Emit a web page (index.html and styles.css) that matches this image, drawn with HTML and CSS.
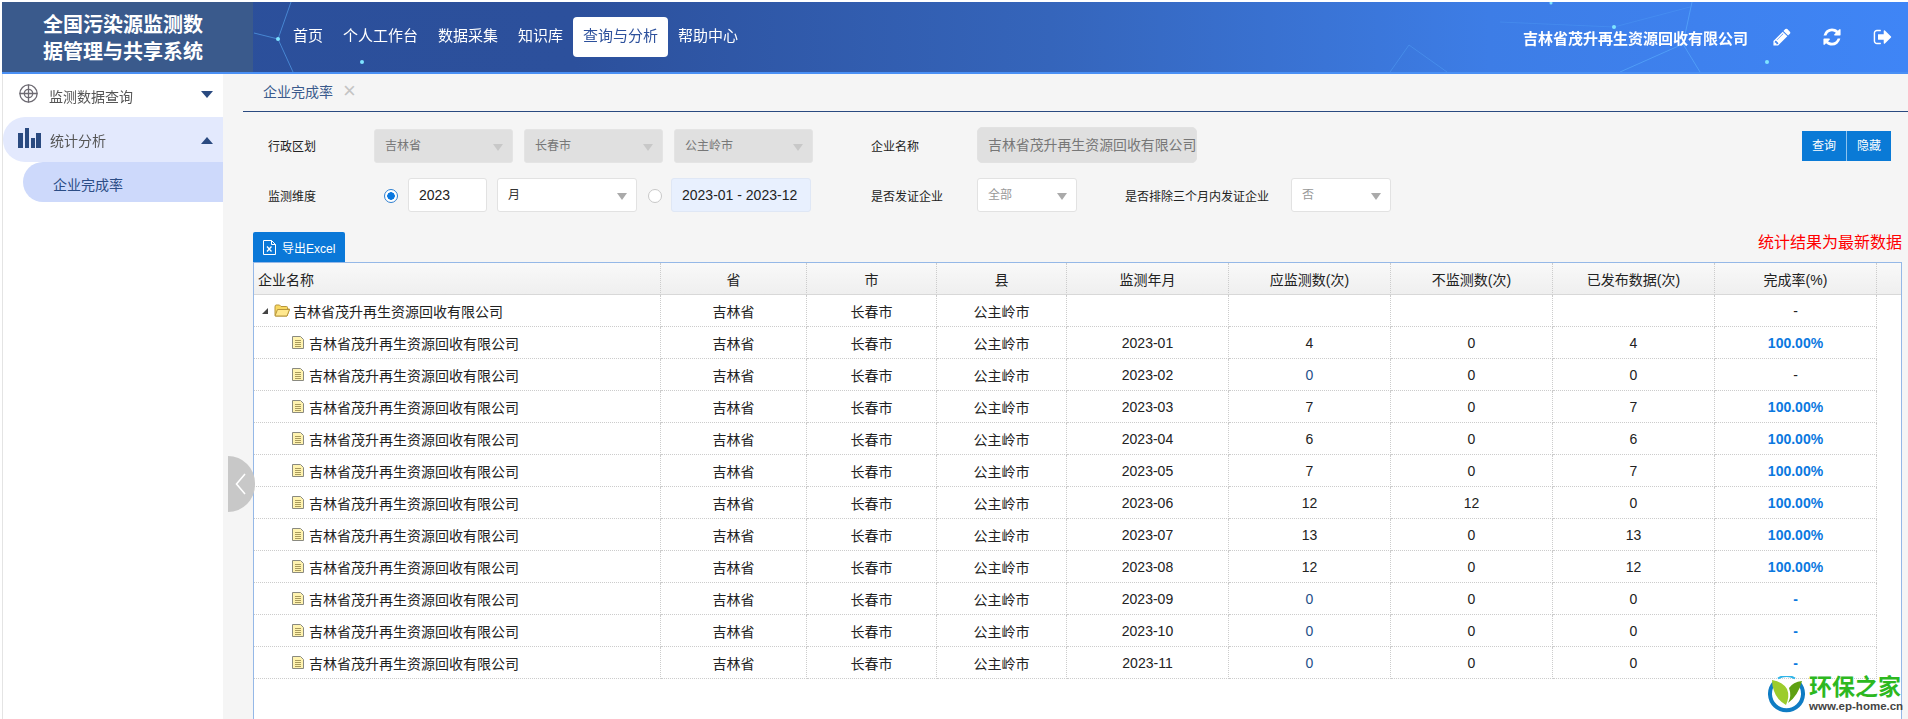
FILE: index.html
```html
<!DOCTYPE html>
<html lang="zh-CN">
<head>
    <meta charset="UTF-8">
    <title>全国污染源监测数据管理与共享系统</title>
    <link rel="stylesheet" href="styles.css">
</head>
<body>
    <header class="top">
        <svg class="top-bg" viewBox="0 0 1908 70" preserveAspectRatio="none">
            <g stroke="#5fb4ff" fill="none" stroke-width="1" opacity="0.55">
                <path d="M278 37 L291 0 M278 37 L293 70 M278 37 L254 31"/>
                <path d="M1409 43 L1390 70 M1409 43 L1447 70" opacity="0.6"/>
                <path d="M1692 0 L1683 42 L1700 70 M1683 42 L1620 70"/>
                <path d="M1500 20 L1614 25 L1690 5" opacity="0.4"/>
            </g>
            <g fill="#7fe4ff">
                <circle cx="278" cy="37" r="2"/>
                <circle cx="362" cy="60" r="2"/>
                <circle cx="1614" cy="25" r="2"/>
                <circle cx="1767" cy="60" r="2"/>
                <circle cx="1551" cy="1" r="1.500"/>
            </g>
        </svg>
        <div class="logo"><div class="logo-text">全国污染源监测数据管理与共享系统</div></div>
        <nav class="nav">
            <a class="nav-item">首页</a>
            <a class="nav-item">个人工作台</a>
            <a class="nav-item">数据采集</a>
            <a class="nav-item">知识库</a>
            <a class="nav-item active">查询与分析</a>
            <a class="nav-item">帮助中心</a>
        </nav>
        <div class="user">
            <span class="user-name">吉林省茂升再生资源回收有限公司</span>
            <svg class="top-icon" viewBox="0 0 1792 1792"><path d="M491 1536l91-91-235-235-91 91v107h128v128h107zm523-928q0-22-22-22-10 0-17 7l-542 542q-7 7-7 17 0 22 22 22 10 0 17-7l542-542q7-7 7-17zm-54-192l416 416-832 832h-416v-416zm683 96q0 53-37 90l-166 166-416-416 166-165q36-38 90-38 53 0 91 38l235 234q37 39 37 91z"/></svg>
            <svg class="top-icon" viewBox="0 0 1792 1792"><path d="M1639 1056q0 5-1 7-64 268-268 434.500t-478 166.500q-146 0-282.500-55t-243.500-157l-129 129q-19 19-45 19t-45-19-19-45v-448q0-26 19-45t45-19h448q26 0 45 19t19 45-19 45l-137 137q71 66 161 102t187 36q134 0 250-65t186-179q11-17 53-117 8-23 30-23h192q13 0 22.500 9.500t9.500 22.500zm25-800v448q0 26-19 45t-45 19h-448q-26 0-45-19t-19-45 19-45l138-138q-148-137-349-137-134 0-250 65t-186 179q-11 17-53 117-8 23-30 23h-199q-13 0-22.500-9.500t-9.500-22.500v-7q65-268 270-434.500t480-166.500q146 0 284 55.500t245 156.500l130-129q19-19 45-19t45 19 19 45z"/></svg>
            <svg class="top-icon" viewBox="0 0 1792 1792"><path d="M704 1440q0 4 1 20t.5 26.500-3 23.500-10 19.500-20.500 6.500h-320q-119 0-203.500-84.500t-84.500-203.500v-704q0-119 84.500-203.500t203.500-84.500h320q13 0 22.500 9.500t9.500 22.500q0 4 1 20t.5 26.500-3 23.500-10 19.500-20.500 6.500h-320q-66 0-113 47t-47 113v704q0 66 47 113t113 47h288 11 13t11.500 1 11.500 3 8 5.500 7 9 2 13.500zm928-544q0 26-19 45l-544 544q-19 19-45 19t-45-19-19-45v-288h-448q-26 0-45-19t-19-45v-384q0-26 19-45t45-19h448v-288q0-26 19-45t45-19 45 19l544 544q19 19 19 45z"/></svg>
        </div>
    </header>

    <div class="app">
        <aside class="side">
            <div class="menu">
                <svg class="menu-icon" width="19" height="19" viewBox="0 0 19 19" fill="none" stroke="#6d6a72" stroke-width="1.300">
                    <circle cx="9.500" cy="9.500" r="8.600"/>
                    <circle cx="9.500" cy="9.500" r="4.200"/>
                    <path d="M0.500 9.500H18.500M9.500 0.500V18.500"/>
                </svg>
                <span class="menu-text">监测数据查询</span>
                <span class="caret-down"></span>
            </div>
            <div class="menu open">
                <svg class="menu-icon" width="23" height="20" viewBox="0 0 23 20" fill="#2a4a80">
                    <rect x="0" y="5" width="5" height="15"/>
                    <rect x="7" y="0" width="4" height="20"/>
                    <rect x="13" y="10" width="4" height="10"/>
                    <rect x="18" y="5" width="5" height="15"/>
                </svg>
                <span class="menu-text">统计分析</span>
                <span class="caret-up"></span>
            </div>
            <div class="submenu">企业完成率</div>
        </aside>

        <main class="main">
            <div class="tabs">
                <span class="tab">企业完成率</span>
                <span class="tab-close">×</span>
            </div>

            <div class="form-row first">
                <span class="label w106">行政区划</span>
                <div class="sel disabled w139">吉林省</div>
                <div class="sel disabled w139">长春市</div>
                <div class="sel disabled w139 last">公主岭市</div>
                <span class="label w106 ml58">企业名称</span>
                <div class="name-input">吉林省茂升再生资源回收有限公司</div>
                <div class="btns">
                    <span class="btn">查询</span>
                    <span class="btn">隐藏</span>
                </div>
            </div>

            <div class="form-row second">
                <span class="label w116">监测维度</span>
                <span class="radio checked"></span>
                <div class="year-input">2023</div>
                <div class="sel w140 dark">月</div>
                <span class="radio second-radio"></span>
                <div class="date-input">2023-01 - 2023-12</div>
                <span class="label w106 ml60">是否发证企业</span>
                <div class="sel w100 faded">全部</div>
                <span class="label w166 ml48">是否排除三个月内发证企业</span>
                <div class="sel w100 faded">否</div>
            </div>

            <div class="tool-row">
                <button class="export">
                    <svg width="13" height="15" viewBox="0 0 13 15" fill="none" stroke="#fff" stroke-width="1">
                        <path d="M0.500 0.500H8.500L12.500 4.500V14.500H0.500Z"/>
                        <path d="M8.500 0.500V4.500H12.500"/>
                        <path d="M4 6.500L8.500 11.500M8.500 6.500L4 11.500" stroke-width="1.300"/>
                    </svg>
                    导出Excel
                </button>
                <span class="notice">统计结果为最新数据</span>
            </div>

            <div class="grid-box">
                <table class="grid">
                    <colgroup>
                        <col class="c-name"><col class="c-prov"><col class="c-area"><col class="c-area">
                        <col class="c-num"><col class="c-num"><col class="c-num"><col class="c-num"><col class="c-num"><col>
                    </colgroup>
                    <thead>
                        <tr>
                            <th class="left">企业名称</th><th>省</th><th>市</th><th>县</th><th>监测年月</th>
                            <th>应监测数(次)</th><th>不监测数(次)</th><th>已发布数据(次)</th><th>完成率(%)</th><th class="gutter"></th>
                        </tr>
                    </thead>
                    <tbody>
                        <tr>
                            <td class="left"><div class="tree parent"><span class="tree-arrow"></span>
                                <svg class="folder" width="16" height="13" viewBox="0 0 16 13"><path d="M1 3V11Q1 12 2 12H13L15.500 5H13.500V3.500Q13.500 2.500 12.500 2.500H7L5.500 1H2Q1 1 1 3Z" fill="#f8d862" stroke="#b8973c" stroke-width="1"/><path d="M3.500 5.500H15.500L13 12H1Z" fill="#ffe88e" stroke="#b8973c" stroke-width="1"/></svg>
                                吉林省茂升再生资源回收有限公司</div></td>
                            <td>吉林省</td><td>长春市</td><td>公主岭市</td><td></td><td></td><td></td><td></td><td>-</td>
                        </tr>
                        <tr>
                            <td class="left"><div class="tree leaf"><svg class="doc" width="12" height="13" viewBox="0 0 12 13"><path d="M0.500 0.500H8.500L11.500 3.500V12.500H0.500Z" fill="#fff3b0" stroke="#8a8a80"/><path d="M3 4.500H9M3 6.500H9M3 8.500H9M3 10.500H9" stroke="#a89a5c"/></svg>吉林省茂升再生资源回收有限公司</div></td>
                            <td>吉林省</td><td>长春市</td><td>公主岭市</td><td>2023-01</td><td>4</td><td>0</td><td>4</td><td class="rate">100.00%</td>
                        </tr>
                        <tr>
                            <td class="left"><div class="tree leaf"><svg class="doc" width="12" height="13" viewBox="0 0 12 13"><path d="M0.500 0.500H8.500L11.500 3.500V12.500H0.500Z" fill="#fff3b0" stroke="#8a8a80"/><path d="M3 4.500H9M3 6.500H9M3 8.500H9M3 10.500H9" stroke="#a89a5c"/></svg>吉林省茂升再生资源回收有限公司</div></td>
                            <td>吉林省</td><td>长春市</td><td>公主岭市</td><td>2023-02</td><td class="zero">0</td><td>0</td><td>0</td><td>-</td>
                        </tr>
                        <tr>
                            <td class="left"><div class="tree leaf"><svg class="doc" width="12" height="13" viewBox="0 0 12 13"><path d="M0.500 0.500H8.500L11.500 3.500V12.500H0.500Z" fill="#fff3b0" stroke="#8a8a80"/><path d="M3 4.500H9M3 6.500H9M3 8.500H9M3 10.500H9" stroke="#a89a5c"/></svg>吉林省茂升再生资源回收有限公司</div></td>
                            <td>吉林省</td><td>长春市</td><td>公主岭市</td><td>2023-03</td><td>7</td><td>0</td><td>7</td><td class="rate">100.00%</td>
                        </tr>
                        <tr>
                            <td class="left"><div class="tree leaf"><svg class="doc" width="12" height="13" viewBox="0 0 12 13"><path d="M0.500 0.500H8.500L11.500 3.500V12.500H0.500Z" fill="#fff3b0" stroke="#8a8a80"/><path d="M3 4.500H9M3 6.500H9M3 8.500H9M3 10.500H9" stroke="#a89a5c"/></svg>吉林省茂升再生资源回收有限公司</div></td>
                            <td>吉林省</td><td>长春市</td><td>公主岭市</td><td>2023-04</td><td>6</td><td>0</td><td>6</td><td class="rate">100.00%</td>
                        </tr>
                        <tr>
                            <td class="left"><div class="tree leaf"><svg class="doc" width="12" height="13" viewBox="0 0 12 13"><path d="M0.500 0.500H8.500L11.500 3.500V12.500H0.500Z" fill="#fff3b0" stroke="#8a8a80"/><path d="M3 4.500H9M3 6.500H9M3 8.500H9M3 10.500H9" stroke="#a89a5c"/></svg>吉林省茂升再生资源回收有限公司</div></td>
                            <td>吉林省</td><td>长春市</td><td>公主岭市</td><td>2023-05</td><td>7</td><td>0</td><td>7</td><td class="rate">100.00%</td>
                        </tr>
                        <tr>
                            <td class="left"><div class="tree leaf"><svg class="doc" width="12" height="13" viewBox="0 0 12 13"><path d="M0.500 0.500H8.500L11.500 3.500V12.500H0.500Z" fill="#fff3b0" stroke="#8a8a80"/><path d="M3 4.500H9M3 6.500H9M3 8.500H9M3 10.500H9" stroke="#a89a5c"/></svg>吉林省茂升再生资源回收有限公司</div></td>
                            <td>吉林省</td><td>长春市</td><td>公主岭市</td><td>2023-06</td><td>12</td><td>12</td><td>0</td><td class="rate">100.00%</td>
                        </tr>
                        <tr>
                            <td class="left"><div class="tree leaf"><svg class="doc" width="12" height="13" viewBox="0 0 12 13"><path d="M0.500 0.500H8.500L11.500 3.500V12.500H0.500Z" fill="#fff3b0" stroke="#8a8a80"/><path d="M3 4.500H9M3 6.500H9M3 8.500H9M3 10.500H9" stroke="#a89a5c"/></svg>吉林省茂升再生资源回收有限公司</div></td>
                            <td>吉林省</td><td>长春市</td><td>公主岭市</td><td>2023-07</td><td>13</td><td>0</td><td>13</td><td class="rate">100.00%</td>
                        </tr>
                        <tr>
                            <td class="left"><div class="tree leaf"><svg class="doc" width="12" height="13" viewBox="0 0 12 13"><path d="M0.500 0.500H8.500L11.500 3.500V12.500H0.500Z" fill="#fff3b0" stroke="#8a8a80"/><path d="M3 4.500H9M3 6.500H9M3 8.500H9M3 10.500H9" stroke="#a89a5c"/></svg>吉林省茂升再生资源回收有限公司</div></td>
                            <td>吉林省</td><td>长春市</td><td>公主岭市</td><td>2023-08</td><td>12</td><td>0</td><td>12</td><td class="rate">100.00%</td>
                        </tr>
                        <tr>
                            <td class="left"><div class="tree leaf"><svg class="doc" width="12" height="13" viewBox="0 0 12 13"><path d="M0.500 0.500H8.500L11.500 3.500V12.500H0.500Z" fill="#fff3b0" stroke="#8a8a80"/><path d="M3 4.500H9M3 6.500H9M3 8.500H9M3 10.500H9" stroke="#a89a5c"/></svg>吉林省茂升再生资源回收有限公司</div></td>
                            <td>吉林省</td><td>长春市</td><td>公主岭市</td><td>2023-09</td><td class="zero">0</td><td>0</td><td>0</td><td class="rate">-</td>
                        </tr>
                        <tr>
                            <td class="left"><div class="tree leaf"><svg class="doc" width="12" height="13" viewBox="0 0 12 13"><path d="M0.500 0.500H8.500L11.500 3.500V12.500H0.500Z" fill="#fff3b0" stroke="#8a8a80"/><path d="M3 4.500H9M3 6.500H9M3 8.500H9M3 10.500H9" stroke="#a89a5c"/></svg>吉林省茂升再生资源回收有限公司</div></td>
                            <td>吉林省</td><td>长春市</td><td>公主岭市</td><td>2023-10</td><td class="zero">0</td><td>0</td><td>0</td><td class="rate">-</td>
                        </tr>
                        <tr>
                            <td class="left"><div class="tree leaf"><svg class="doc" width="12" height="13" viewBox="0 0 12 13"><path d="M0.500 0.500H8.500L11.500 3.500V12.500H0.500Z" fill="#fff3b0" stroke="#8a8a80"/><path d="M3 4.500H9M3 6.500H9M3 8.500H9M3 10.500H9" stroke="#a89a5c"/></svg>吉林省茂升再生资源回收有限公司</div></td>
                            <td>吉林省</td><td>长春市</td><td>公主岭市</td><td>2023-11</td><td class="zero">0</td><td>0</td><td>0</td><td class="rate">-</td>
                        </tr>
                    </tbody>
                </table>
            </div>

            <!-- 侧栏收起按钮 -->
            <div class="collapse">
                <svg width="11" height="22" viewBox="0 0 11 22" fill="none" stroke="#fff" stroke-width="1.600"><path d="M10 1L1.500 11L10 21"/></svg>
            </div>
        </main>
    </div>

    <!-- 水印 -->
    <div class="mark">
        <svg width="37" height="37" viewBox="0 0 37 37">
            <path d="M6 7A16.500 16.500 0 1 0 31 7" fill="none" stroke="#0f7cc4" stroke-width="4"/>
            <path d="M10 2.500A16.500 16.500 0 0 1 27 2.500" fill="none" stroke="#2fb4e8" stroke-width="2"/>
            <path d="M4 4Q15 6 19 13Q22 20 18 29Q9 24 6 15Q4 10 4 4Z" fill="#9ccc2c"/>
            <path d="M34 5Q25 6 21 12Q24 20 20 27Q30 20 34 5Z" fill="#5ea012"/>
        </svg>
        <div class="mark-text">
            <div class="mark-cn">环保之家</div>
            <div class="mark-en">www.ep-home.cn</div>
        </div>
    </div>
</body>
</html>
```

FILE: styles.css
```css
* {
    box-sizing: border-box;
}
html, body {
    height: 100%;
}
body {
    margin: 0;
    height: 719px;
    overflow: hidden;
    position: relative;
    padding-top: 2px;
    background-color: #fff;
    color: #222;
    font-family: "Liberation Sans", "Noto Sans CJK SC", sans-serif;
    font-size: 14px;
}

/* 顶部 */
.top {
    position: relative;
    display: flex;
    align-items: center;
    height: 72px;
    margin-left: 2px;
    border-bottom: 2px solid #4a90f5;
    background: linear-gradient(90deg, #2b4f9a 0, #2c509c 30%, #3565bb 55%, #3d7de6 78%, #3f85f6 100%);
}
.top-bg {
    position: absolute;
    left: -2px;
    top: 0;
    width: 1908px;
    height: 70px;
}
.logo {
    position: relative;
    flex: none;
    width: 251px;
    height: 70px;
    padding: 10px 0 0 41px;
    background-color: #3a5a8c;
}
.logo-text {
    width: 162px;
    color: #fff;
    font-size: 20px;
    font-weight: bold;
    line-height: 27px;
}
.nav {
    position: relative;
    display: flex;
    margin-left: 30px;
}
.nav-item {
    height: 40px;
    padding: 0 10px;
    color: #fff;
    font-size: 15px;
    line-height: 38px;
    border-radius: 4px;
}
.nav-item.active {
    background-color: #fff;
    color: #2c509c;
}
.user {
    position: relative;
    display: flex;
    align-items: center;
    margin-left: auto;
    margin-right: 15px;
}
.user-name {
    margin-right: 24px;
    color: #fff;
    font-size: 15px;
    font-weight: bold;
}
.top-icon {
    width: 20px;
    height: 20px;
    margin-left: 31px;
    fill: #fff;
}
.user-name + .top-icon {
    margin-left: 0;
}
.user-name + .top-icon + .top-icon {
    margin-left: 30px;
}

/* 布局 */
.app {
    display: flex;
    height: 645px;
}
.side {
    flex: none;
    width: 223px;
    margin-left: 2px;
    border-left: 1px solid #e4e4e4;
    margin-right: -2px;
    background-color: #fff;
}
.main {
    position: relative;
    flex: 1;
    min-width: 0;
    padding: 0 6px 0 30px;
    background-color: #f5f5f5;
}

/* 左侧菜单 */
.menu {
    position: relative;
    display: flex;
    align-items: center;
    height: 43px;
    padding: 0 12px 0 16px;
    color: #555;
    font-size: 14px;
}
.menu.open {
    height: 45px;
    padding-left: 15px;
    border-radius: 22px 0 0 22px;
    background-color: #e3e9fd;
}
.menu-icon {
    flex: none;
    margin-top: -4px;
}
.menu-text {
    margin-left: 11px;
}
.menu.open .menu-text {
    margin-left: 9px;
    margin-top: 1px;
}
.caret-down, .caret-up {
    width: 0;
    height: 0;
    margin-left: auto;
    border-left: 6px solid transparent;
    border-right: 6px solid transparent;
}
.caret-down {
    margin-top: -3px;
    border-top: 7px solid #2a4a80;
}
.caret-up {
    margin-top: 1px;
    border-bottom: 7px solid #2a4a80;
}
.submenu {
    height: 40px;
    margin-left: 20px;
    padding-left: 30px;
    border-radius: 20px 0 0 20px;
    background-color: #cdd9fb;
    color: #2c4d86;
    font-size: 14px;
    line-height: 46px;
}

/* 页签 */
.tabs {
    display: flex;
    align-items: center;
    height: 38px;
    margin-left: -10px;
    margin-right: -6px;
    padding: 0 0 3px 20px;
    border-bottom: 1px solid #2a4a80;
}
.tab {
    color: #3a5a8c;
    font-size: 14px;
}
.tab-close {
    margin-left: 10px;
    color: #c4c4c4;
    font-size: 22px;
    font-weight: 300;
    line-height: 18px;
}

/* 查询条件 */
.form-row {
    display: flex;
    align-items: center;
    margin-left: 15px;
    font-size: 12px;
}
.form-row.first {
    height: 38px;
    margin-top: 15px;
}
.form-row.first .label {
    margin-top: -2px;
}
.form-row.second {
    height: 34px;
    margin-top: 13px;
}
.label {
    flex: none;
    color: #222;
}
.w106 { width: 106px; }
.w116 { width: 116px; }
.w166 { width: 166px; }
.w139 { width: 139px; margin-right: 11px; }
.w139.last { margin-right: 0; }
.w140 { width: 140px; }
.w100 { width: 100px; }
.ml58 { margin-left: 58px; }
.ml60 { margin-left: 60px; }
.ml48 { margin-left: 48px; }
.sel {
    position: relative;
    flex: none;
    height: 34px;
    padding-left: 10px;
    border: 1px solid #e2e2e2;
    border-radius: 3px;
    background-color: #fff;
    color: #999;
    font-size: 12px;
    line-height: 32px;
}
.sel::after {
    content: "";
    position: absolute;
    right: 9px;
    top: 14px;
    border-left: 5.500px solid transparent;
    border-right: 5.500px solid transparent;
    border-top: 7px solid #aaa;
}
.sel.disabled {
    background-color: #e0e0e0;
    border-color: #e4e4e4;
    color: #777;
}
.sel.disabled::after {
    border-top-color: #c8c8c8;
}
.sel.dark {
    color: #333;
}
.name-input {
    flex: none;
    align-self: flex-start;
    width: 220px;
    height: 36px;
    padding-left: 10px;
    border-radius: 5px;
    border: 1px solid #e2e2e2;
    background-color: #e0e0e0;
    color: #777;
    font-size: 13.900px;
    line-height: 34px;
    white-space: nowrap;
}
.btns {
    display: flex;
    margin-left: auto;
    margin-right: 11px;
}
.btn {
    width: 44px;
    height: 30px;
    background-color: #0a7ad6;
    color: #fff;
    font-size: 12px;
    line-height: 30px;
    text-align: center;
}
.btn + .btn {
    width: 45px;
    border-left: 1px solid #8fc3ee;
}
.radio {
    flex: none;
    width: 14px;
    height: 14px;
    margin-top: 2px;
    margin-right: 10px;
    border: 1px solid #c8c8c8;
    border-radius: 50%;
    background-color: #fff;
}
.radio.checked {
    border-color: #2f7fd0;
    background: radial-gradient(circle, #0a78e0 0, #0a78e0 3.500px, #fff 4px);
}
.second-radio {
    margin-left: 11px;
    margin-right: 9px;
}
.year-input {
    flex: none;
    width: 79px;
    height: 34px;
    margin-right: 10px;
    padding-left: 10px;
    border: 1px solid #e2e2e2;
    border-radius: 3px;
    background-color: #fff;
    font-size: 14px;
    line-height: 32px;
}
.date-input {
    flex: none;
    width: 140px;
    height: 34px;
    padding-left: 10px;
    border: 1px solid #dfe7f5;
    border-radius: 3px;
    background-color: #e8f0fe;
    font-size: 14px;
    line-height: 32px;
}

/* 工具条 */
.tool-row {
    display: flex;
    justify-content: space-between;
    height: 30px;
    margin-top: 20px;
}
.export {
    display: flex;
    align-items: center;
    width: 92px;
    height: 30px;
    padding: 0 0 0 10px;
    border: none;
    border-radius: 2px 2px 0 0;
    background-color: #0a78d8;
    color: #fff;
    font-family: inherit;
    font-size: 12px;
}
.export svg {
    margin-right: 6px;
}
.notice {
    margin-top: 1px;
    color: #f00;
    font-size: 16px;
    line-height: 20px;
}

/* 表格 */
.grid-box {
    height: 457px;
    overflow: hidden;
    border: 1px solid #95b8e7;
    border-bottom: none;
    background-color: #fff;
}
.grid {
    width: 1647px;
    table-layout: fixed;
    border-collapse: separate;
    border-spacing: 0;
    font-size: 14px;
}
.c-name { width: 407px; }
.c-prov { width: 146px; }
.c-area { width: 130px; }
.c-num { width: 162px; }
.grid th {
    height: 32px;
    padding: 0;
    border-right: 1px dotted #ccc;
    border-bottom: 1px solid #d8d8d8;
    background: linear-gradient(180deg, #f9f9f9 0, #efefef 100%);
    font-weight: normal;
    text-align: center;
}
.grid th.gutter {
    border-right: none;
}
.grid td {
    height: 32px;
    padding: 0;
    border-right: 1px dotted #ccc;
    border-bottom: 1px dotted #ccc;
    text-align: center;
    white-space: nowrap;
}
.grid th.left, .grid td.left {
    padding-left: 4px;
    text-align: left;
}
.grid td.left {
    padding-left: 0;
}
.tree {
    display: flex;
    align-items: center;
}
.tree.parent {
    padding-left: 8px;
}
.tree.leaf {
    padding-left: 38px;
}
.tree-arrow {
    width: 0;
    height: 0;
    margin-right: 6px;
    border-left: 6px solid transparent;
    border-bottom: 6px solid #444;
}
.folder {
    margin-right: 3px;
}
.doc {
    margin-right: 5px;
}
.rate {
    color: #0a78e0;
    font-weight: bold;
}
.zero {
    color: #1f4f8a;
}

/* 收起按钮 */
.collapse {
    position: absolute;
    left: 5px;
    top: 382px;
    display: flex;
    align-items: center;
    padding-left: 7px;
    width: 27px;
    height: 56px;
    border-radius: 0 28px 28px 0;
    background-color: #c8c8c8;
}

/* 水印 */
.mark {
    position: absolute;
    right: 4px;
    bottom: 6px;
    display: flex;
    align-items: center;
}
.mark svg {
    margin-right: 4px;
}
.mark-text {
    width: 95px;
    white-space: nowrap;
}
.mark-cn {
    color: #2db81f;
    font-size: 23px;
    font-weight: bold;
    line-height: 25px;
}
.mark-en {
    color: #444;
    font-size: 11.500px;
    font-weight: bold;
    line-height: 13px;
}
```
